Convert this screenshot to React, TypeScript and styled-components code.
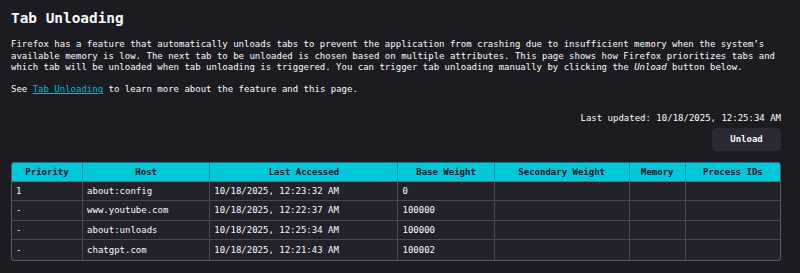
import React from "react";
import styled, { createGlobalStyle } from "styled-components";

const Global = createGlobalStyle`
  html, body {
    margin: 0;
    padding: 0;
    background: #1c1b22;
  }
  body {
    font-family: "DejaVu Sans Mono", "Liberation Mono", monospace;
    color: #fbfbfe;
    font-size: 9px;
  }
`;

const Page = styled.main`
  padding: 10px 19px 12px 11px;
  display: flex;
  flex-direction: column;
`;

const Title = styled.h1`
  margin: 0;
  font-size: 14.4px;
  line-height: 17px;
  font-weight: bold;
`;

const Para = styled.p<{ $gap: number }>`
  margin: ${(p) => p.$gap}px 0 0;
  line-height: 11.7px;
  font-size: 9px;
`;

const Link = styled.a`
  color: #0ab9cd;
  text-decoration: underline;
`;

const Updated = styled.div`
  margin-top: 17px;
  text-align: right;
  line-height: 11.7px;
`;

const Actions = styled.div`
  display: flex;
  justify-content: flex-end;
  margin-top: 3px;
`;

const Button = styled.button`
  width: 69px;
  height: 23px;
  border: none;
  border-radius: 4px;
  background: #2b2a33;
  color: #fbfbfe;
  font-family: inherit;
  font-size: 9px;
  font-weight: bold;
  padding: 0;
`;

const TableFrame = styled.div`
  margin-top: 11px;
  border: 1px solid #5b5a63;
  border-radius: 3px;
  overflow: hidden;
  background: #23222b;
`;

const Table = styled.table`
  width: 100%;
  table-layout: fixed;
  border-collapse: separate;
  border-spacing: 0;
  font-size: 9px;
`;

const HeadCell = styled.th<{ $last?: boolean }>`
  background: #00c8d9;
  color: #15141a;
  font-weight: bold;
  text-align: center;
  height: 19px;
  padding: 0 4px;
  border-right: ${(p) => (p.$last ? "none" : "1px solid #13919f")};
  border-bottom: 1px solid #13919f;
  box-sizing: border-box;
`;

const Cell = styled.td<{ $last?: boolean; $bottom?: boolean }>`
  height: 19.5px;
  padding: 0 3px 0 4px;
  color: #fbfbfe;
  text-align: left;
  white-space: nowrap;
  border-right: ${(p) => (p.$last ? "none" : "1px solid #4a4952")};
  border-bottom: ${(p) => (p.$bottom ? "none" : "1px solid #4a4952")};
  box-sizing: border-box;
`;

const columns = [
  { name: "Priority", width: 71 },
  { name: "Host", width: 127 },
  { name: "Last Accessed", width: 188 },
  { name: "Base Weight", width: 96 },
  { name: "Secondary Weight", width: 135 },
  { name: "Memory", width: 56 },
  { name: "Process IDs", width: 94 },
];

const rows = [
  ["1", "about:config", "10/18/2025, 12:23:32 AM", "0", "", "", ""],
  ["-", "www.youtube.com", "10/18/2025, 12:22:37 AM", "100000", "", "", ""],
  ["-", "about:unloads", "10/18/2025, 12:25:34 AM", "100000", "", "", ""],
  ["-", "chatgpt.com", "10/18/2025, 12:21:43 AM", "100002", "", "", ""],
];

export default function App() {
  return (
    <>
      <Global />
      <Page>
        <Title>Tab Unloading</Title>
        <Para $gap={12}>
          Firefox has a feature that automatically unloads tabs to prevent the application from crashing due to
          insufficient memory when the system’s available memory is low. The next tab to be unloaded is chosen based
          on multiple attributes. This page shows how Firefox prioritizes tabs and which tab will be unloaded when tab
          unloading is triggered. You can trigger tab unloading manually by clicking the <em>Unload</em> button below.
        </Para>
        <Para $gap={10}>
          See <Link href="#">Tab Unloading</Link> to learn more about the feature and this page.
        </Para>
        <Updated>Last updated: 10/18/2025, 12:25:34 AM</Updated>
        <Actions>
          <Button>Unload</Button>
        </Actions>
        <TableFrame>
          <Table>
            <colgroup>
              {columns.map((c) => (
                <col key={c.name} style={{ width: c.width }} />
              ))}
            </colgroup>
            <thead>
              <tr>
                {columns.map((c, i) => (
                  <HeadCell key={c.name} $last={i === columns.length - 1}>
                    {c.name}
                  </HeadCell>
                ))}
              </tr>
            </thead>
            <tbody>
              {rows.map((r, ri) => (
                <tr key={ri}>
                  {r.map((v, ci) => (
                    <Cell key={ci} $last={ci === r.length - 1} $bottom={ri === rows.length - 1}>
                      {v}
                    </Cell>
                  ))}
                </tr>
              ))}
            </tbody>
          </Table>
        </TableFrame>
      </Page>
    </>
  );
}
